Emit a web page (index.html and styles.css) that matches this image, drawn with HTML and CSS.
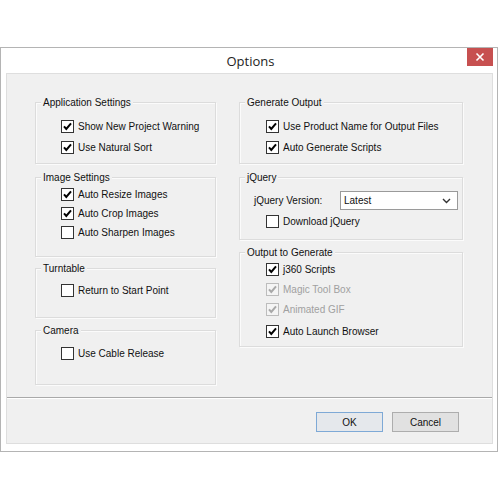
FILE: index.html
```html
<!DOCTYPE html>
<html>
<head>
<meta charset="utf-8">
<link rel="stylesheet" href="styles.css">
</head>
<body>
<div class="window">
  <div class="titlebar">
    <span class="spacer"></span>
    <span class="title">Options</span>
    <span class="close"><svg width="10" height="10" viewBox="0 0 10 10"><path d="M1.5 1.5 L8.5 8.5 M8.5 1.5 L1.5 8.5" stroke="#fff" stroke-width="1.6"/></svg></span>
  </div>
  <div class="client">
    <div class="content">
      <div class="col col-left">
        <div class="group g-app">
          <div class="gtitle">Application Settings</div>
          <div class="rows r-app">
            <label class="row"><span class="cb on"></span>Show New Project Warning</label>
            <label class="row"><span class="cb on"></span>Use Natural Sort</label>
          </div>
        </div>
        <div class="group g-img">
          <div class="gtitle">Image Settings</div>
          <div class="rows r-img">
            <label class="row"><span class="cb on"></span>Auto Resize Images</label>
            <label class="row"><span class="cb on"></span>Auto Crop Images</label>
            <label class="row"><span class="cb"></span>Auto Sharpen Images</label>
          </div>
        </div>
        <div class="group g-turn">
          <div class="gtitle">Turntable</div>
          <div class="rows r-turn">
            <label class="row"><span class="cb"></span>Return to Start Point</label>
          </div>
        </div>
        <div class="group g-cam">
          <div class="gtitle">Camera</div>
          <div class="rows r-cam">
            <label class="row"><span class="cb"></span>Use Cable Release</label>
          </div>
        </div>
      </div>
      <div class="col col-right">
        <div class="group g-gen">
          <div class="gtitle">Generate Output</div>
          <div class="rows r-app">
            <label class="row"><span class="cb on"></span>Use Product Name for Output Files</label>
            <label class="row"><span class="cb on"></span>Auto Generate Scripts</label>
          </div>
        </div>
        <div class="group g-jq">
          <div class="gtitle">jQuery</div>
          <div class="rows r-jq">
            <div class="selrow">
              <span class="sellabel">jQuery Version:</span>
              <span class="select"><span>Latest</span><svg width="9" height="6" viewBox="0 0 9 6"><path d="M1 1 L4.5 4.5 L8 1" stroke="#333" stroke-width="1.4" fill="none"/></svg></span>
            </div>
            <label class="row"><span class="cb"></span>Download jQuery</label>
          </div>
        </div>
        <div class="group g-out">
          <div class="gtitle">Output to Generate</div>
          <div class="rows r-out">
            <label class="row"><span class="cb on"></span>j360 Scripts</label>
            <label class="row disabled"><span class="cb on"></span>Magic Tool Box</label>
            <label class="row disabled"><span class="cb on"></span>Animated GIF</label>
            <label class="row last"><span class="cb on"></span>Auto Launch Browser</label>
          </div>
        </div>
      </div>
    </div>
    <div class="buttons">
      <button class="btn btn-ok">OK</button>
      <button class="btn">Cancel</button>
    </div>
  </div>
</div>
</body>
</html>
```
FILE: styles.css
```css
html, body {
  margin: 0;
  padding: 0;
  background: #fff;
}
body {
  font-family: "Liberation Sans", Arial, sans-serif;
  font-size: 10px;
  color: #111;
}
.window {
  margin-top: 47px;
  width: 498px;
  height: 405px;
  box-sizing: border-box;
  border: 1px solid #b4b4b4;
  background: #fff;
  display: flex;
  flex-direction: column;
}
.titlebar {
  height: 25px;
  display: grid;
  grid-template-columns: 1fr auto 1fr;
  align-items: start;
}
.title {
  font-family: "Open Sans", "Noto Sans", sans-serif;
  font-size: 13px;
  line-height: 26px;
  color: #222;
  margin-left: 3px;
}
.close {
  justify-self: end;
  margin-right: 4px;
  width: 26px;
  height: 18px;
  background: #c75050;
  display: flex;
  align-items: center;
  justify-content: center;
}
.client {
  margin: 0 4px 0 5px;
  height: 371px;
  box-sizing: border-box;
  border: 1px solid #dedede;
  background: #f0f0f0;
  display: flex;
  flex-direction: column;
}
.content {
  height: 324px;
  box-sizing: border-box;
  padding: 28px 0 0 28px;
  display: flex;
  gap: 23px;
  border-bottom: 1px solid #a9a9a9;
}
.col {
  display: flex;
  flex-direction: column;
}
.col-left { width: 181px; }
.col-right { width: 224px; }
.group {
  box-sizing: border-box;
  border: 1px solid #dcdcdc;
  box-shadow: inset 1px 1px 0 #fbfbfb, 1px 1px 0 #fbfbfb;
}
.g-app, .g-gen { height: 62px; margin-bottom: 13px; }
.g-img { height: 80px; margin-bottom: 11px; }
.g-turn { height: 50px; margin-bottom: 12px; }
.g-cam { height: 55px; }
.g-jq { height: 63px; margin-bottom: 12px; }
.g-out { height: 95px; }
.gtitle {
  width: fit-content;
  height: 13px;
  line-height: 13px;
  margin: -7px 0 0 5px;
  padding: 0 2px 0 2px;
  background: #f0f0f0;
}
.rows {
  display: flex;
  flex-direction: column;
  padding-left: 25px;
}
.r-app { padding-top: 8px; gap: 3px; }
.r-img { padding-top: 1px; gap: 1px; }
.r-turn { padding-top: 6px; }
.r-cam { padding-top: 7px; }
.r-jq { padding-top: 7px; gap: 2px; padding-left: 26px; }
.r-out { padding-top: 1px; gap: 2px; padding-left: 26px; }
.r-out .last { margin-top: 2px; }
.g-gen .rows { padding-left: 26px; }
.row {
  height: 18px;
  display: flex;
  align-items: center;
  gap: 4px;
}
.row.disabled { color: #a0a0a0; }
.cb {
  width: 13px;
  height: 13px;
  box-sizing: border-box;
  border: 1px solid #333;
  background: #fff;
  flex: none;
  display: inline-block;
}
.cb.on {
  background: #fff url("data:image/svg+xml;utf8,<svg xmlns='http://www.w3.org/2000/svg' width='11' height='11' viewBox='0 0 11 11'><path d='M2 5.3 L4.3 8 L9 2.3' stroke='black' stroke-width='2' fill='none'/></svg>") no-repeat center;
}
.disabled .cb {
  border-color: #bcbcbc;
  background-color: #f4f4f4;
}
.disabled .cb.on {
  background: #f4f4f4 url("data:image/svg+xml;utf8,<svg xmlns='http://www.w3.org/2000/svg' width='11' height='11' viewBox='0 0 11 11'><path d='M2 5.3 L4.3 8 L9 2.3' stroke='%23a8a8a8' stroke-width='2' fill='none'/></svg>") no-repeat center;
}
.selrow {
  height: 19px;
  display: flex;
  align-items: center;
  margin-left: -12px;
}
.sellabel { width: 86px; }
.select {
  width: 118px;
  height: 19px;
  box-sizing: border-box;
  border: 1px solid #9a9a9a;
  background: #fff;
  display: flex;
  align-items: center;
  justify-content: space-between;
  padding: 0 6px 0 3px;
}
.buttons {
  flex: 1;
  border-top: 1px solid #fff;
  display: flex;
  justify-content: flex-end;
  align-items: flex-start;
  gap: 9px;
  padding: 13px 33px 0 0;
}
.btn {
  width: 67px;
  height: 20px;
  box-sizing: border-box;
  border: 1px solid #adadad;
  background: #e1e1e1;
  font-family: "Liberation Sans", Arial, sans-serif;
  font-size: 10px;
  color: #111;
  padding: 0;
  margin: 0;
}
.btn-ok {
  border-color: #7ea9d6;
  background: #e5e8ec;
}
```
